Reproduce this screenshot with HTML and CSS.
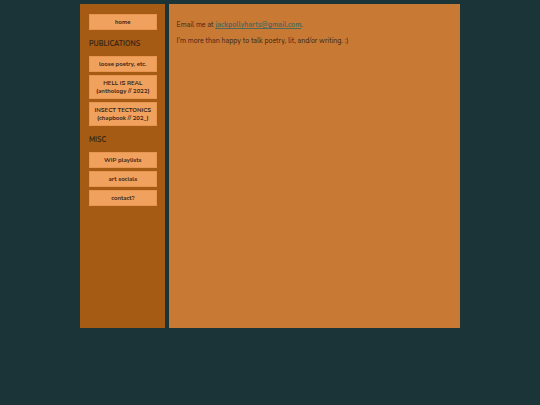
FILE: index.html
```html
<!DOCTYPE html>
<html lang="en">
<head>
	<meta charset="utf-8">
	<meta name="viewport" content="width=device-width, initial-scale=1">
	<title>contact</title>
	<link rel="stylesheet" href="styles.css">
</head>
<body>
	<div class="container">
		<nav class="sidebar">
			<a class="button" href="#home">home</a>

			<h2>PUBLICATIONS</h2>
			<a class="button" href="#poetry">loose poetry, etc.</a>
			<a class="button" href="#hell">HELL IS REAL<br>(anthology // 2022)</a>
			<a class="button" href="#insect">INSECT TECTONICS<br>(chapbook // 202_)</a>

			<h2>MISC</h2>
			<a class="button" href="#playlists">WIP playlists</a>
			<a class="button" href="#socials">art socials</a>
			<a class="button" href="#contact">contact?</a>
		</nav>

		<main class="content">
			<p>Email me at <a href="mailto:jackpollyharts@gmail.com">jackpollyharts@gmail.com</a>.</p>
			<p>I'm more than happy to talk poetry, lit, and/or writing. :)</p>
		</main>
	</div>
</body>
</html>
```

FILE: styles.css
```css
body{
	margin: 0;
	background: #1b3438;
	color: #3c2616;
	font-family: Nunito, "Open Sans", sans-serif;
	font-size: 7px;
	line-height: 8px;
}

.container{
	display: grid;
	grid-template-columns: 9fr 31fr;
	gap: 4px;
	min-height: 80vh;
	padding: 4px 80px;
}

.sidebar{
	display: flex;
	flex-direction: column;
	gap: 3px;
	padding: 10px 8px 10px 9px;
	background: #a65b14;
}

.sidebar h2{
	margin: 6px 0 4px;
	font-size: 7px;
	font-weight: bold;
	line-height: 10px;
}

.button{
	padding: 3px 0;
	border: 1px solid #e8954f;
	background: #f1a15e;
	color: inherit;
	font-size: 6px;
	font-weight: bold;
	text-align: center;
	text-decoration: none;
}

.content{
	padding: 17px 8px;
	background: #c87a35;
}

.content p{
	margin: 0 0 8px;
}

.content a{
	color: #53695a;
	font-weight: bold;
}
```
